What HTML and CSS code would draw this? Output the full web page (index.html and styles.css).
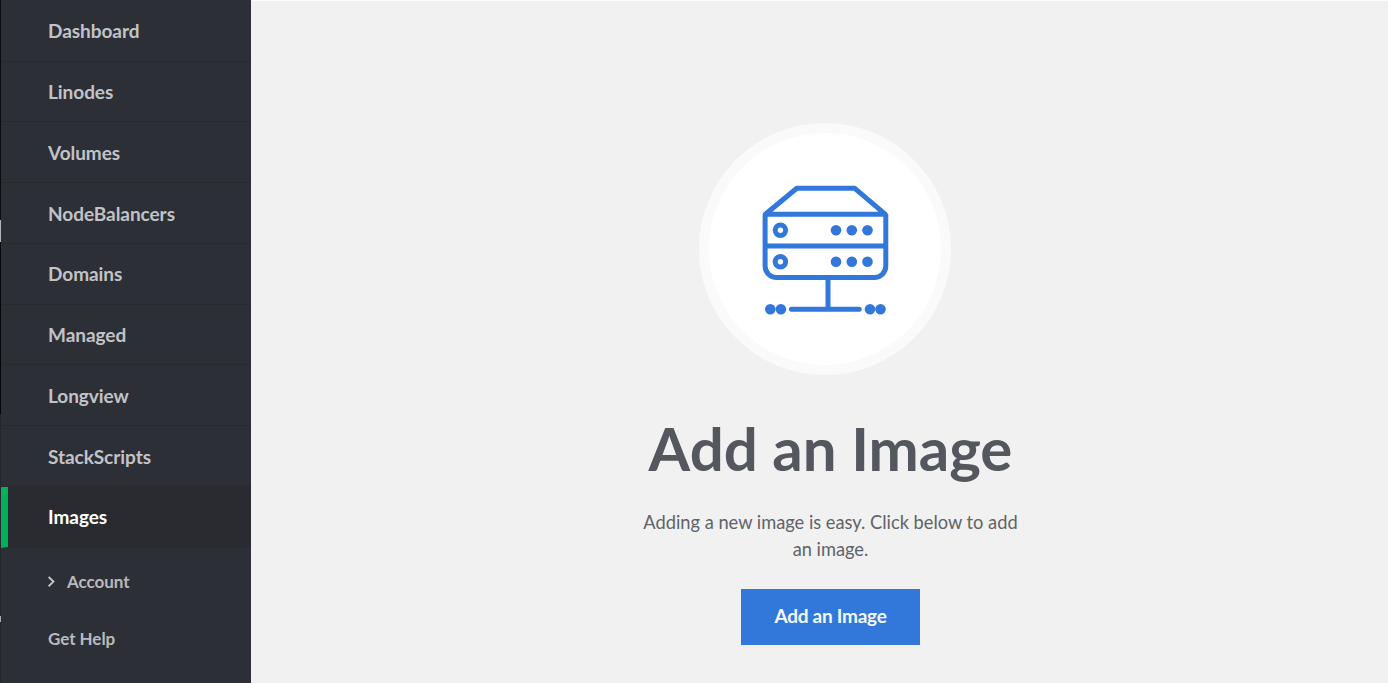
FILE: index.html
```html
<!DOCTYPE html>
<html lang="en">
<head>
<meta charset="utf-8">
<title>Images</title>
<link rel="stylesheet" href="styles.css">
</head>
<body>
<div class="app">
  <div class="edge"></div>
  <nav class="sidebar">
    <a class="item"><span>Dashboard</span></a>
    <a class="item"><span>Linodes</span></a>
    <a class="item"><span>Volumes</span></a>
    <a class="item"><span>NodeBalancers</span></a>
    <a class="item"><span>Domains</span></a>
    <a class="item"><span>Managed</span></a>
    <a class="item"><span>Longview</span></a>
    <a class="item"><span>StackScripts</span></a>
    <a class="item active"><span>Images</span></a>
    <a class="sub account"><svg class="chevron" viewBox="0 0 8 12"><path d="M.6 1 5.4 5.6 .6 10.2"/></svg><span>Account</span></a>
    <a class="sub help"><span>Get Help</span></a>
  </nav>
  <main class="main">
    <div class="badge">
      <svg class="server" viewBox="0 0 252 252">
        <g class="lines">
          <path d="M66.1 91.3V143.1a11.5 11.5 0 0 0 11.5 11.5H175.3a11.5 11.5 0 0 0 11.5-11.5V91.3"/>
          <path d="M66.4 91.3 97.8 65.3H155.8L186.4 91.3Z"/>
          <path d="M66.3 123H186.8M129 155V186.2"/>
          <path class="round" d="M92.4 186.2H160.2"/>
          <circle cx="81.4" cy="107.3" r="5.2"/>
          <circle cx="81.4" cy="138.8" r="5.2"/>
        </g>
        <g class="dots">
          <circle cx="137" cy="107.3" r="5.3"/><circle cx="152.8" cy="107.3" r="5.3"/><circle cx="168.5" cy="107.3" r="5.3"/>
          <circle cx="137" cy="138.8" r="5.3"/><circle cx="152.8" cy="138.8" r="5.3"/><circle cx="168.5" cy="138.8" r="5.3"/>
          <circle cx="71.3" cy="186.2" r="5.3"/><circle cx="81.9" cy="186.2" r="5.3"/>
          <circle cx="171" cy="186.2" r="5.3"/><circle cx="181.5" cy="186.2" r="5.3"/>
        </g>
      </svg>
    </div>
    <h1 class="title">Add an Image</h1>
    <p class="copy">Adding a new image is easy. Click below to add<br>an image.</p>
    <button class="button">Add an Image</button>
  </main>
</div>
</body>
</html>
```
FILE: styles.css
```css
* { box-sizing: border-box; }
body { margin: 0; font-family: Lato, sans-serif; }
.app { display: flex; width: 1388px; height: 683px; overflow: hidden; }
.edge {
  width: 1px;
  background: linear-gradient(#0c0d11 0 220px, #b4b5b8 220px 242px, #050609 242px 414px, #25272d 414px 616px, #a9aaae 616px 622px, #25272d 622px);
}
.sidebar { display: flex; flex-direction: column; width: 250px; background: #2d2f37; }
.item {
  display: flex;
  align-items: center;
  height: 60.75px;
  flex: none;
  padding: 0.3px 0 0 47px;
  border-bottom: 1px solid #282a30;
  font-size: 19px;
  letter-spacing: -0.05px;
  font-weight: 700;
  color: #c2c3c6;
}
.item:first-child { height: 61.5px; }
.active { background: #2a2b30; border-left: 7px solid #00b159; border-bottom-color: #2a2b30; padding-left: 40px; color: #fff; }
.sub {
  display: flex;
  align-items: center;
  height: 57px;
  flex: none;
  padding-left: 47px;
  font-size: 17px;
  letter-spacing: -0.03px;
  font-weight: 700;
  color: #b9babd;
}
.account { margin-top: 5.8px; }
.chevron { width: 8px; height: 12px; margin-right: 11px; fill: none; stroke: #c5c6c9; stroke-width: 1.9; }
.main {
  display: flex;
  flex-direction: column;
  align-items: center;
  width: 1137px;
  padding: 121.5px 0 0 22px;
  background: #f1f1f1;
  border-top: 1px solid #fcfcfc;
}
.badge { flex: none; width: 252px; height: 252px; margin-right: 10.5px; border: 10px solid #fafafa; border-radius: 50%; background: #fff; }
.server { display: block; width: 252px; height: 252px; margin: -10px; }
.lines { fill: none; stroke: #3178da; stroke-width: 5; stroke-linejoin: round; }
.round { stroke-linecap: round; }
.dots { fill: #3178da; }
.title { margin: 37px 0 0; font-size: 60px; line-height: 72px; font-weight: 700; color: #54575d; white-space: nowrap; }
.copy { margin: 25px 0 0; font-size: 18.25px; line-height: 27px; color: #606369; text-align: center; white-space: nowrap; }
.button { width: 179px; height: 56px; margin-top: 26.6px; padding: 0 0 3px; border: 0; background: #3178da; font: 700 19px Lato, sans-serif; letter-spacing: -0.25px; color: #f3f8ff; }
```
